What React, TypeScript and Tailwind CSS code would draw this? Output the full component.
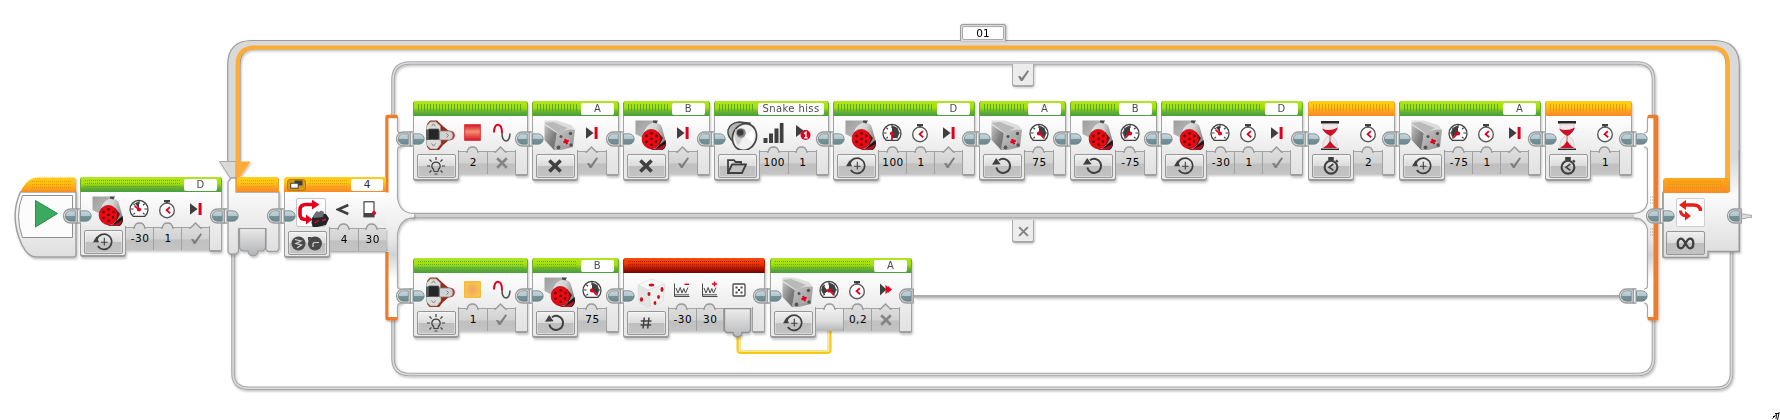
import React from "react";

type Tone = "green" | "orange" | "red";
type Param = { icon: React.ReactNode; value?: string; mark?: "check" | "cross"; bump?: "round" | "tri"; kind?: "in" | "out" };

const INK = "#3f3f3f";
const RED = "#e2001f";

/* ---------- small glyphs ---------- */

const Check = () => (
  <svg width="13" height="13" viewBox="0 0 13 13"><path d="M1 7.200 3.200 7 4.800 9 10.500 1.200 12 2.200 5.500 12H3.800Z" fill="#7e7e7e" /></svg>
);
const Cross = ({ color = "#858585", size = 12, w = 2.7 }: { color?: string; size?: number; w?: number }) => (
  <svg width={size} height={size} viewBox="0 0 12 12"><path d="M1.2 1.2 10.8 10.8M10.8 1.2 1.2 10.8" fill="none" stroke={color} strokeWidth={w} /></svg>
);

const Gauge = ({ kind }: { kind: "low" | "full" | "pos" | "neg" | "wired" }) => {
  const sector = {
    low: "M10 10 V3 A7 7 0 0 0 6 4.2Z",
    full: "M10 10 V3 A7 7 0 0 1 14.9 15 L10 15Z",
    pos: "M10 10 V3 A7 7 0 0 1 15.5 14.2Z",
    neg: "M10 10 V3 A7 7 0 0 0 4.5 14.2Z",
    wired: "M10 10 V3 A7 7 0 0 1 15.5 14.2Z M9 11 L4 5 A7 7 0 0 0 4.5 14.5Z",
  }[kind];
  const needle = { low: "M10.5 11 5.6 6.8", full: "M10 9 V17", pos: "M9 9 15 15.2", neg: "M11 9 5 15.2", wired: "M10 10 15 15.2" }[kind];
  return (
    <svg width="20" height="20" viewBox="0 0 20 20">
      <path d="M4.2 17.3 A9 9 0 1 1 15.8 17.3Z" fill="#fff" stroke={INK} strokeWidth="1.3" />
      <path d="M10 2v3M2 10h2.6M15.4 10H18M4.3 4.6 6 6.2M15.7 4.6 14 6.2M4.4 15.4 6 14M15.6 15.4 14 14" stroke={INK} strokeWidth="1.2" />
      <path d={sector} fill={INK} />
      <path d={needle} stroke={RED} strokeWidth="1.7" />
      <circle cx="10" cy="10.5" r="2.1" fill={RED} />
    </svg>
  );
};

const Watch = () => (
  <svg width="18" height="20" viewBox="0 0 18 20">
    <rect x="6" y="1" width="6" height="2.4" fill={INK} />
    <path d="M9 3v2" stroke={INK} strokeWidth="2" />
    <circle cx="9" cy="11.4" r="7.3" fill="#fff" stroke="#5b5b5b" strokeWidth="1.4" />
    <path d="M11.800 8.200 8.6 11.3 12.200 14.200" fill="none" stroke={RED} strokeWidth="1.8" />
  </svg>
);
const StopAt = () => (
  <svg width="14" height="14" viewBox="0 0 14 14"><path d="M1 1.3 8.6 7 1 12.7Z" fill={INK} /><rect x="9.6" y="1" width="3" height="12" fill={RED} /></svg>
);
const Coast = () => (
  <svg width="14" height="13" viewBox="0 0 14 13"><path d="M1 .5 7.500 6.500 1 12.500Z" fill={INK} /><path d="M6.500 1.500 8.600 4.200V2.800L13 6.500 8.600 10.200V8.800L6.500 11.500Z" fill={RED} /></svg>
);
const Square = ({ warm }: { warm?: boolean }) => (
  <svg width="17" height="17" viewBox="0 0 17 17">
    <defs>
      <linearGradient id="sqRed" x1="0" y1="0" x2="0" y2="1"><stop offset="0" stopColor="#d41528" /><stop offset=".45" stopColor="#f0906f" /><stop offset="1" stopColor="#d8132a" /></linearGradient>
      <radialGradient id="sqAmber"><stop offset="0" stopColor="#eea463" /><stop offset="1" stopColor="#fbc44c" /></radialGradient>
    </defs>
    <rect x=".7" y=".7" width="15.6" height="15.6" fill={warm ? "url(#sqAmber)" : "url(#sqRed)"} stroke={warm ? "#f3b21c" : "#dc2b30"} strokeWidth="1" />
  </svg>
);
const Pulse = () => (
  <svg width="18" height="20" viewBox="0 0 18 20">
    <path d="M1 9.5C1 -1 9 -1 9 10" fill="none" stroke={RED} strokeWidth="2" />
    <path d="M9 10C9 20.500 17 20.500 17 10.500" fill="none" stroke="#4b4b4b" strokeWidth="1.5" />
  </svg>
);
const Bars = () => (
  <svg width="21" height="20" viewBox="0 0 21 20"><path d="M.5 15h4v5h-4zM6 10.500h4V20H6zM11.500 5.500h4V20h-4zM16.800 0h3.700v20h-3.700z" fill={INK} /></svg>
);
const PlayOnce = () => (
  <svg width="16" height="17" viewBox="0 0 16 17">
    <path d="M1 1 9 7 1 13Z" fill={INK} /><circle cx="10.500" cy="11" r="5" fill={RED} />
    <path d="M9 9.700 10.900 8.400V13.800M9.200 13.800h3.400" fill="none" stroke="#fff" strokeWidth="1.400" />
  </svg>
);
const Noise = ({ plus }: { plus?: boolean }) => (
  <svg width="18" height="17" viewBox="0 0 18 17">
    <path d="M1.500 2.500V15.500H16.500M1.500 13.800H16" fill="none" stroke="#4b4b4b" strokeWidth="1" />
    <path d="M3 7 5 12 7.200 6.500 9 12 10.800 7.500 12.500 12 15 6.500" fill="none" stroke="#4b4b4b" strokeWidth="1" />
    <path d={plus ? "M11 3h5M13.500 .5v5" : "M11.500 3.300h4.500"} stroke={RED} strokeWidth="1.400" />
  </svg>
);
const Die = () => (
  <svg width="14" height="14" viewBox="0 0 14 14">
    <rect x="1" y="1" width="12" height="12" rx="1" fill="#fff" stroke="#4b4b4b" strokeWidth="1.300" />
    <path d="M3.500 3.500h2v2h-2zM8.500 3.500h2v2h-2zM6 6h2v2H6zM3.500 8.500h2v2h-2zM8.500 8.500h2v2h-2z" fill={INK} />
  </svg>
);
const Distance = () => (
  <svg width="14" height="17" viewBox="0 0 14 17">
    <rect x="1" y=".8" width="10" height="15" fill="#fff" stroke="#333" strokeWidth="1.100" />
    <rect x="1" y="12" width="10" height="4" fill="#444" /><circle cx="11" cy="12" r="2" fill={RED} />
  </svg>
);

/* ---------- mode button glyphs ---------- */

const ModeLight = () => (
  <svg width="18" height="19" viewBox="0 0 18 19" fill="none" stroke={INK} strokeWidth="1.200">
    <path d="M7 14.500 6.600 12.500C3.200 9.500 5 5.200 9 5.200S14.800 9.500 11.400 12.500L11 14.500Z" />
    <path d="M7.500 17h3M9 0v3M2.500 2.500 4.600 4.700M15.500 2.500 13.400 4.700M0 9h3M15 9h3M2.500 15.500 4.400 13.400M15.500 15.500 13.600 13.400" />
  </svg>
);
const ModeFolder = () => (
  <svg width="20" height="15" viewBox="0 0 20 15"><path d="M1 14V1.200h6L8.500 3H14V5.500M1 14 5 5.500H19L15 14Z" fill="none" stroke={INK} strokeWidth="1.800" /></svg>
);
const ModeTime = () => (
  <svg width="21" height="18" viewBox="0 0 21 18" fill="none" stroke={INK}>
    <path d="M4.800 13A7.600 7.600 0 1 0 3.800 6.500" strokeWidth="1.700" /><path d="M0 9.300 3.600 3.200 6 9.300Z" fill={INK} stroke="none" />
    <path d="M11.300 4.800V12.500M8 9.200h6.500" strokeWidth="1.100" />
  </svg>
);
const ModeOn = () => (
  <svg width="20" height="18" viewBox="0 0 20 18"><path d="M7 3.200A7 7 0 1 1 4.300 10.500" fill="none" stroke={INK} strokeWidth="2" /><path d="M0 7.800 4.200 1 8.600 7.200Z" fill={INK} /></svg>
);
const ModeWatch = () => (
  <svg width="18" height="18" viewBox="0 0 18 18">
    <path d="M6.200 0h5.600v3H6.200z" fill={INK} /><path d="M14 3.300 15.800 5" stroke={INK} strokeWidth="2" /><circle cx="9" cy="10.200" r="6.400" fill="none" stroke={INK} strokeWidth="2.100" />
    <path d="M11.400 7 7 10.200 11.400 13.400" fill="none" stroke={INK} strokeWidth="1.600" />
  </svg>
);
const ModeHash = () => (
  <svg width="12" height="12" viewBox="0 0 12 12"><path d="M4.300 .5 3 11.500M9 .5 7.700 11.500M.8 4h10.700M.5 8h10.700" stroke={INK} strokeWidth="1.500" /></svg>
);
const ModeX = () => <Cross color={INK} size={14} w={3} />;

/* ---------- hardware pictures ---------- */

const LargeMotor = () => (
  <svg width="32" height="32" viewBox="0 0 32 32">
    <defs>
      <linearGradient id="lmArm" x1="0" y1="0" x2="1" y2="1"><stop offset="0" stopColor="#9d9d9d" /><stop offset="1" stopColor="#c4c4c4" /></linearGradient>
      <linearGradient id="lmBody" x1="0" y1="0" x2="1" y2=".3"><stop offset="0" stopColor="#e6e6e6" /><stop offset=".55" stopColor="#d2d2d2" /><stop offset="1" stopColor="#8a8a8a" /></linearGradient>
    </defs>
    <path d="M.5 .5H21V12L10 19 .5 14Z" fill="url(#lmArm)" />
    <path d="M9 12Q12 3 20 2.500 26 3 27 8L31 22Q31 30 22 31L14 28Z" fill="url(#lmBody)" />
    <path d="M18 .5H23L21.500 3.500 18 2.500Z" fill="#4a4a4a" />
    <path d="M21 28 30.500 20Q32 26 29 29T20 31.500Z" fill="#221416" />
    <path d="M13 27Q18 32 24 31 30 29 30.500 24L25 27 19 29Z" fill="#a81620" />
    <path d="M23 12 28 18 24 26Z" fill="#55181c" />
    <ellipse cx="16.300" cy="19" rx="9.200" ry="9.600" fill="#ec0a12" stroke="#a4000a" strokeWidth=".7" />
    <g fill="#5a0307"><ellipse cx="16.500" cy="13.300" rx="1.400" ry="1.200" /><ellipse cx="21.500" cy="16" rx="1.200" ry="1.400" /><ellipse cx="11.500" cy="16" rx="1.300" ry="1.400" /><circle cx="16.500" cy="19" r="1.300" /><ellipse cx="21" cy="21.500" rx="1.200" ry="1.400" /><ellipse cx="11.500" cy="21.800" rx="1.300" ry="1.400" /><circle cx="16.500" cy="24.700" r="1.300" /></g>
  </svg>
);
const MediumMotor = () => (
  <svg width="32" height="32" viewBox="0 0 32 32">
    <defs>
      <linearGradient id="mmSide" x1="0" y1="0" x2="1" y2="1"><stop offset="0" stopColor="#c6c6c6" /><stop offset=".6" stopColor="#7d7d7d" /><stop offset="1" stopColor="#6a6a6a" /></linearGradient>
      <linearGradient id="mmFront" x1="0" y1="0" x2="1" y2="1"><stop offset="0" stopColor="#c8c8c8" /><stop offset="1" stopColor="#8f8f8f" /></linearGradient>
    </defs>
    <path d="M.5 4 13 12 11 31 .5 20Z" fill="url(#mmSide)" />
    <path d="M.5 .5 13 .5 27 5 31.500 10 14 14 .5 5Z" fill="#dedede" /><path d="M.5 3 9 2 24 8 14 13Z" fill="#b9b9b9" />
    <path d="M13 13 Q22 8 31 10L29 27 13 31 10 29Z" fill="url(#mmFront)" />
    <g fill="#555"><circle cx="26.500" cy="13.500" r="1.700" /><circle cx="17" cy="16.500" r="1.500" /><circle cx="14.500" cy="27.500" r="1.900" /><circle cx="27" cy="25" r="1.700" /></g>
    <circle cx="22" cy="21.500" r="4" fill="#b4b4b4" /><path d="M19.400 22.600 24.800 20.400M21 19 23.200 24.200" stroke={RED} strokeWidth="2.200" />
  </svg>
);
const Brick = () => (
  <svg width="32" height="32" viewBox="0 0 32 32">
    <path d="M5 .5H12L19 7 24 11V20L18 25 13 31.500H6L2 27V4Z" fill="#9a2a16" />
    <path d="M5.500 1.800H11L15.500 6V11.500H1.500V6ZM1.500 19H16V24L12 29H5.500L1.500 25Z" fill="#dcdddb" stroke="#8c8c88" strokeWidth=".6" />
    <circle cx="25" cy="15.500" r="4.800" fill="#e01424" /><path d="M1 9.500H5V20H1Z" fill="#595c5c" />
    <rect x="3.500" y="9" width="10.500" height="10.500" rx="1" fill="#242628" stroke="#555" strokeWidth=".8" />
    <path d="M14.500 11H25Q28 12 28 15.500T25 20H14.500Z" fill="#d2d2d2" stroke="#808080" strokeWidth=".8" />
    <path d="M6.500 6.300 8.500 3.800 10.500 6.300M6.500 23.500 8.500 26 10.500 23.500M21.500 13.500 23.500 15.500 21.500 17.500" fill="none" stroke="#777" strokeWidth=".9" />
  </svg>
);
const Speaker = () => (
  <svg width="32" height="32" viewBox="0 0 32 32">
    <path d="M2 10 Q4 3 13 2L24 3 15 28 8 22Q1 17 2 10Z" fill="#b5b5b5" stroke="#444" strokeWidth="1.300" />
    <ellipse cx="18.500" cy="17" rx="11.800" ry="13.600" transform="rotate(22 18.500 17)" fill="#f0f0f0" stroke="#444" strokeWidth="1.700" />
    <path d="M9.500 9 18 16 12 26Q6.500 16 9.500 9Z" fill="#cfcfcf" /><path d="M19 16 28 9Q30 16 26 22Z" fill="#fff" />
    <circle cx="15" cy="13" r="4.800" fill="#858585" /><circle cx="14.300" cy="12.500" r="3.300" fill="#3a3a3a" />
  </svg>
);
const Hourglass = () => (
  <svg width="20" height="32" viewBox="0 0 20 32">
    <rect x="1" y="1" width="18" height="2.600" fill="#2e2428" /><rect x="1" y="28.500" width="18" height="2.600" fill="#2e2428" />
    <path d="M3 4H17Q18 11 11.500 15.500 18 20 17 28H3Q2 20 8.500 15.500 2 11 3 4Z" fill="#eee9e9" stroke="#c7c2c2" strokeWidth=".6" />
    <path d="M2 8.500Q9 12 18 7.500 16 13 10.800 16 5 14 2 8.500Z" fill="#cf1128" /><path d="M10 15V24" stroke="#cf1128" strokeWidth=".7" /><path d="M3 28Q8 25 10 21 13 25 17 28Z" fill="#cf1128" />
  </svg>
);
const Dice = () => (
  <svg width="30" height="32" viewBox="0 0 30 32">
    <path d="M2 8 15 2 29 7 12 13Z" fill="#f7f7f7" stroke="#dcdcdc" strokeWidth=".6" /><path d="M2 8 12 13 15 31 3 26Z" fill="#e3e3e3" stroke="#d8d8d8" strokeWidth=".6" /><path d="M12 13 29 7 27 24 15 31Z" fill="#efefef" stroke="#d8d8d8" strokeWidth=".6" />
    <g fill="#c9101d"><ellipse cx="15.500" cy="8" rx="2.900" ry="1.600" /><ellipse cx="13" cy="17" rx="1.500" ry="2.100" /><ellipse cx="5.500" cy="22.500" rx="1.600" ry="2.200" /><ellipse cx="26" cy="12.500" rx="1.500" ry="2.400" /><ellipse cx="22.500" cy="20" rx="1.400" ry="2.100" /><ellipse cx="19" cy="26" rx="1.400" ry="2" /></g>
  </svg>
);

/* ---------- building parts ---------- */

const Joint = ({ at, half }: { at: string; half?: boolean }) => (
  <svg className={`absolute ${at}`} width="31" height="16" viewBox="0 0 31 16">
    <defs>
      <linearGradient id="pill" x1="0" y1="0" x2="0" y2="1"><stop offset="0" stopColor="#c9d6da" /><stop offset=".5" stopColor="#b3c5cb" /><stop offset=".52" stopColor="#76939a" /><stop offset="1" stopColor="#6c8990" /></linearGradient>
    </defs>
    <path d={half ? "M14.500 1H8.500A7 7 0 0 0 8.500 15H14.500" : "M18.500 1H8.500A7 7 0 0 0 8.500 15H18.500"} fill="#ececec" stroke="#9a9a9a" strokeWidth="1.300" />
    <path d="M13.300 2.800H8.500A5.200 5.200 0 0 0 8.500 13.200H13.300Z" fill="url(#pill)" stroke="#6f878d" strokeWidth=".8" />
    <path d="M15.200 .5V15.500" stroke="#979797" strokeWidth="1.400" />
    {!half && <path d="M17.500 1V15" stroke="#c3c3c3" />}
    {!half && <path d="M18.500 2.800H24A5.200 5.200 0 0 1 24 13.200H18.500Z" fill="url(#pill)" stroke="#6f878d" strokeWidth=".8" />}
  </svg>
);

const tones: Record<Tone, string> = {
  green: "bg-[linear-gradient(#b2e61f,#a4df0c_45%,#5fae38_75%,#4c9c3c)] border-[#6cab2e]",
  orange: "bg-[linear-gradient(#ffcf1c,#ffc90e_35%,#fc9a26_75%,#f88a22)] border-[#f0a023]",
  red: "bg-[linear-gradient(#fb4a08,#ee3300_40%,#a80f00_75%,#6d0500)] border-[#b52000]",
};
const dots: Record<Tone, string> = {
  green: "bg-[#3e9b2b]",
  orange: "bg-[#dd9000]",
  red: "bg-[#8f1800]",
};

const Texture = ({ tone, lined }: { tone: Tone; lined?: boolean }) => (
  <div className={`h-[7px] min-w-0 flex-1 self-start mt-[3px] opacity-75 ${dots[tone]} ${lined
    ? "[mask-image:repeating-linear-gradient(90deg,#000_0_1px,transparent_1px_3px)]"
    : "[mask-image:repeating-linear-gradient(90deg,#000_0_1px,transparent_1px_2px),repeating-linear-gradient(#000_0_1px,transparent_1px_3px)] [mask-composite:intersect]"}`} />
);

const Header = ({ tone, label, wide, lined, className = "" }: { tone: Tone; label?: string; wide?: boolean; lined?: boolean; className?: string }) => (
  <div className={`flex h-[15px] items-center gap-1 rounded-t-[3px] border-x pr-[4px] pl-[4px] ${tones[tone]} ${className}`}>
    <Texture tone={tone} lined={lined} />
    {label && (
      <div className={`flex h-[12px] items-center justify-center rounded-[2px] bg-white text-[10px] leading-[12px] tracking-[0.4px] text-[#4c4c4c] ${wide ? "w-[66px]" : "w-[33px]"}`}>{label}</div>
    )}
  </div>
);

const ModeButton = ({ children }: { children: React.ReactNode }) => (
  <div className="-mt-px flex h-[31px] w-[46px] shrink-0 items-start justify-center rounded-b-[3px] border-x-[1.5px] border-b-2 border-[#9b9b9b] bg-[#e9e9e9] pt-[4px]">
    <div className="flex h-[24px] w-[39px] items-center justify-center rounded-[2px] border border-[#979797] bg-[linear-gradient(#f1f1f1,#dcdcdc_48%,#bfbfbf_52%,#c3c3c3)] shadow-[inset_0_0_0_1px_rgba(255,255,255,.35)]">{children}</div>
  </div>
);

const ParamCell = ({ p, last }: { p: Param; last: boolean }) => {
  if (p.kind === "out")
    return (
      <div className="relative h-[24px] w-[28px] shrink-0">
        <svg className="absolute -left-px top-0" width="29" height="30" viewBox="0 0 29 30">
          <defs><linearGradient id="plug" x1="0" y1="0" x2="0" y2="1"><stop offset="0" stopColor="#ececec" /><stop offset="1" stopColor="#b9babc" /></linearGradient></defs>
          <path d="M1.500 .7H27.500V22.500L25.500 24.500H19C19 30 10 30 10 24.500H3.500L1.500 22.500Z" fill="url(#plug)" stroke="#909090" strokeWidth="1.300" />
        </svg>
      </div>
    );
  const wired = p.kind === "in";
  return (
    <div className={`relative flex h-[23px] min-w-0 flex-1 items-center justify-center border-t-[1.5px] border-[#a3a3a3] pb-px pl-px text-[10.5px] leading-none tracking-[0.5px] text-black ${wired ? "bg-[linear-gradient(#efefef,#dedede_55%,#b4b6b8)]" : "bg-[linear-gradient(#dcdcdc,#d2d2d2_50%,#c0c0c0_54%,#c4c4c4)]"} ${last ? "" : "border-r border-r-[#a2a2a2]"}`}>
      <svg className="absolute -top-[6px] left-1/2 -ml-[7px]" width="13" height="7" viewBox="0 0 13 7">
        <path d={p.bump === "tri" ? "M0 6 H1.500L6.500 1 11.500 6H13V7H0Z" : "M0 6H1.200Q1.800 1 6.500 1T11.800 6H13V7H0Z"} fill={wired ? "#efefef" : "#dcdcdc"} />
        <path d={p.bump === "tri" ? "M0 6 H1.500L6.500 1 11.500 6H13" : "M0 6H1.200Q1.800 1 6.500 1T11.800 6H13"} fill="none" stroke="#999" strokeWidth="1.300" />
      </svg>
      {p.mark === "check" ? <Check /> : p.mark === "cross" ? <Cross /> : p.value}
    </div>
  );
};

type BlockProps = { at: string; tone?: Tone; label?: string; wide?: boolean; lined?: boolean; picture: React.ReactNode; mode: React.ReactNode; params: Param[] };

const Block = ({ at, tone = "green", label, wide, lined, picture, mode, params }: BlockProps) => (
  <div className={`absolute flex flex-col drop-shadow-[1px_2px_1px_rgba(0,0,0,.22)] ${at}`}>
    <Header tone={tone} label={label} wide={wide} lined={lined} />
    <div className="flex h-[35px] items-start border-x-[1.5px] border-[#a3a3a3] bg-[linear-gradient(#fff,#f5f5f5_50%,#ebebeb)]">
      <div className="flex h-[35px] w-[44px] shrink-0 items-start justify-end pr-px pt-[4px]"><div className="flex w-[33px] justify-center">{picture}</div></div>
      <div className="flex min-w-0 flex-1">
        {params.map((p, i) => <div key={i} className="flex h-[33px] min-w-0 flex-1 items-center justify-center">{p.icon}</div>)}
      </div>
      <div className="w-[11px] shrink-0" />
    </div>
    <div className="flex h-[30px] items-start">
      <ModeButton>{mode}</ModeButton>
      {params.map((p, i) => <ParamCell key={i} p={p} last={i === params.length - 1} />)}
      <div className="-mt-px h-[26px] w-[13px] shrink-0 rounded-b-[2px] border-x-[1.5px] border-b-2 border-[#a0a0a0] bg-[linear-gradient(#ebebeb,#e2e2e2)]" />
    </div>
  </div>
);

const gauge = (kind: "low" | "full" | "pos" | "neg", value: string): Param => ({ icon: <Gauge kind={kind} />, value });
const secs = (value: string): Param => ({ icon: <Watch />, value });
const brake: Param = { icon: <StopAt />, mark: "check", bump: "tri" };

const Tab = ({ at, children }: { at: string; children: React.ReactNode }) => (
  <div className={`absolute flex h-[23px] w-[22px] items-center justify-center rounded-b-[3px] border-x-[1.5px] border-b-2 border-[#a9a9a9] bg-[#ececec] pt-[2px] drop-shadow-[1px_1px_1px_rgba(0,0,0,.2)] ${at}`}>{children}</div>
);

/* ---------- wiring and frames ---------- */

const Track = ({ d }: { d: string }) => (
  <g fill="none">
    <path d={d} stroke="#a8a8a8" strokeWidth="3.600" />
    <path d={d} stroke="#dcdcdc" strokeWidth="1.500" />
  </g>
);

const Frames = () => (
  <svg className="absolute inset-0" width="1780" height="420" viewBox="0 0 1780 420">
    <defs>
      <filter id="soft" x="-5%" y="-5%" width="110%" height="115%"><feDropShadow dx="1" dy="1.500" stdDeviation="1" floodOpacity=".25" /></filter>
      <linearGradient id="body" x1="0" y1="0" x2="0" y2="1"><stop offset="0" stopColor="#fff" /><stop offset="1" stopColor="#dedede" /></linearGradient>
      <linearGradient id="spine" x1="0" y1="116" x2="0" y2="320" gradientUnits="userSpaceOnUse"><stop offset="0" stopColor="#fff" /><stop offset=".35" stopColor="#fff" /><stop offset=".6" stopColor="#e9e9e9" /><stop offset=".68" stopColor="#d3d3d3" /><stop offset=".8" stopColor="#fff" /></linearGradient>
      <linearGradient id="amber" x1="0" y1="0" x2="0" y2="1"><stop offset="0" stopColor="#ffcc18" /><stop offset=".35" stopColor="#ffc30f" /><stop offset="1" stopColor="#f98c22" /></linearGradient>
      <linearGradient id="tailFade" x1="0" y1="158" x2="0" y2="252" gradientUnits="userSpaceOnUse"><stop offset="0" stopColor="#d9d9d9" /><stop offset=".4" stopColor="#fbfbfb" /><stop offset="1" stopColor="#dedede" /></linearGradient>
      <linearGradient id="plug2" x1="0" y1="0" x2="0" y2="1"><stop offset="0" stopColor="#e9e9e9" /><stop offset="1" stopColor="#b2b3b6" /></linearGradient>
    </defs>

    <g filter="url(#soft)">
      <Track d="M233 250V373Q233 388.300 249 388.300H1716Q1731.500 388.300 1731.500 373V250" />
      <Track d="M393 118V80Q393 63 410 63H1637Q1653.500 63 1653.500 80V118" />
      <Track d="M393 318V358Q393 374.500 410 374.500H1637Q1653.500 374.500 1653.500 358V318" />
      <path d="M412 213.500H1636M412 217.800H1636" fill="none" stroke="#a6a6a6" strokeWidth="1.300" />
      <path d="M412 215.600H1636" stroke="#cfcfcf" strokeWidth="3" />
      <path d="M914 296.200H1620" stroke="#999" strokeWidth="2.600" /><path d="M914 296H1620" stroke="#cfcfcf" strokeWidth=".8" />
    </g>

    {/* loop return band */}
    <g filter="url(#soft)">
      <path d="M227.700 163V65Q227.700 40.500 252 40.500H1714Q1739.300 40.500 1739.300 66V251.500H1708V257.500H1663V192H1726V65Q1726 49 1711 49H255Q240 49 240 65V163Z" fill="#d9d9d9" stroke="#9b9b9b" strokeWidth="1.200" />
      <path d="M237.500 164V65Q237.500 47.500 255 47.500H1711Q1728 47.500 1728 65V190" fill="none" stroke="#ffad33" strokeWidth="4" />
      <path d="M219.500 161.500H236V180H231.500Z" fill="#d9d9d9" stroke="#a5a5a5" />
      <path d="M235.500 161.500H250.500L238 180H235.500Z" fill="#ffab35" />
    </g>
    <path d="M1730.500 158H1738.600V251H1709V257H1663.500V192H1730.500Z" fill="url(#tailFade)" />
    <path d="M1739.300 150V251.500H1708V255.500Q1708 257.500 1706 257.500H1665Q1663 257.500 1663 255V192" fill="none" stroke="#9b9b9b" strokeWidth="1.500" />
    <path d="M1663 193V181Q1663 178 1666 178H1726V150H1730V190Q1730 193 1727 193Z" fill="url(#amber)" />
    <rect x="1726" y="120" width="4" height="58.500" fill="#ffad33" />

    {/* loop entry */}
    <g filter="url(#soft)">
      <path d="M236 178 231 178 228 182V252L230 254H236L238.500 251.500V229H266V249.500L268 251.500H277L279 249V192H236Z" fill="url(#body)" stroke="#a0a0a0" strokeWidth="1.300" />
      <path d="M239.500 228.500H265.500V248.500L263 251H258C258 257.500 248 257.500 248 251H242L239.500 248.500Z" fill="url(#plug2)" stroke="#999" strokeWidth="1.200" />
    </g>

    {/* start block */}
    <g filter="url(#soft)">
      <path d="M20.500 192H76V254.500Q76 257 73.500 257H36Q28 257 22 245 9 217 20.500 192Z" fill="url(#body)" stroke="#a0a0a0" strokeWidth="1.500" />
      <path d="M20.500 192Q27 177.500 38 177.500H73.500Q76 177.500 76 180V192Z" fill="url(#amber)" />
      <path d="M22.500 195.500H72.500V237.500H22.500Q14.500 216 22.500 195.500Z" fill="#fcfcfc" stroke="#8f8f8f" />
      <path d="M35.500 200.500 57.500 213.500 35.500 227Z" fill="#3aaa5f" stroke="#2c8d4c" />
    </g>

    {/* switch spines */}
    <g filter="url(#soft)">
      <path d="M388 118H397.500V133H403V146H397.500V198Q400 213.500 414 213.500V217.800Q400 217.800 397.500 234V289H403V303H397.500V317H388V250H330V192H388Z" fill="url(#spine)" />
      <path d="M397.500 118V130Q397.500 133 401 133M401 147Q397.500 147 397.500 150V198Q400 213.500 414 213.500M414 217.800Q400 217.800 397.500 234V286Q397.500 289 401 289M401 303.500Q397.500 303.500 397.500 307V318" fill="none" stroke="#a8a8a8" strokeWidth="1.200" />
      <path d="M398 118.200H388.500V192.500H385.300V117Q385.300 114.800 387.500 114.800H396Q398 114.800 398 118.200ZM385.300 252H388.500V317H398Q398 320.500 396 320.500H387.500Q385.300 320.500 385.300 318.500Z" fill="#ec7d29" />
      <path d="M1653.500 118H1647.500V130Q1647.500 133 1644 133V147Q1647.500 147 1647.500 150V203Q1645 213 1634 213.500V217.800Q1645 218 1647.500 229V286Q1647.500 289 1644 289V303Q1647.500 303 1647.500 307V317H1653.500Z" fill="url(#spine)" />
      <path d="M1647.500 118V130Q1647.500 133 1644 133M1644 147Q1647.500 147 1647.500 150V203Q1645 213 1634 213.500M1634 217.800Q1645 218 1647.500 229V286Q1647.500 289 1644 289M1644 303Q1647.500 303 1647.500 307V317" fill="none" stroke="#a8a8a8" strokeWidth="1.200" />
      <path d="M1647.300 118.200Q1647.300 114.800 1649.500 114.800H1656Q1658.300 114.800 1658.300 117V318.500Q1658.300 320.500 1656 320.500H1649.500Q1647.300 320.500 1647.300 317H1653.500V118.200Z" fill="#ec7d29" />
    </g>
    <path d="M1650 197h4M1650 200h4M1650 203h4M1650 229h4M1650 232h4M1650 235h4" stroke="#aaa" strokeDasharray="1 1" />

    {/* data wire */}
    <path d="M738.500 335V349.500Q738.500 352 741 352H827Q829.500 352 829.500 349.500V330" fill="none" stroke="#f7c711" strokeWidth="4" />
    <path d="M739.300 335V351H828.700V330" fill="none" stroke="#fdebaa" strokeWidth="1.400" />

    <path d="M1739 214H1745L1748 215H1751.500V217.500H1748L1745 218.500H1739Z" fill="#dcdcdc" stroke="#999" strokeWidth=".8" />
    <path d="M1772.500 418.500 1776 414.500 1779.500 412.500M1775 413.500H1779M1776.500 414.500 1776 419M1779 413 1777.500 420M1773 416.500H1775" fill="none" stroke="#111" strokeWidth="1" />
  </svg>
);

export default function App() {
  return (
    <main className="relative h-[420px] w-[1780px] overflow-hidden bg-white font-['DejaVu_Sans',sans-serif]">
      <Frames />

      <div className="absolute left-[960px] top-[24px] h-[17px] w-[46px] rounded-t-[3px] border-x-[1.5px] border-t-[1.5px] border-[#a0a0a0] bg-[#dcdcdc] p-px drop-shadow-[1px_0_1px_rgba(0,0,0,.25)]">
        <div className="flex h-[14px] items-center justify-center rounded-[2px] border border-[#aaa] bg-white pt-px text-[10.5px] leading-none text-black">01</div>
      </div>
      <Tab at="left-[1012px] top-[64px]"><Check /></Tab>
      <Tab at="left-[1012px] top-[220px]"><Cross size={11} w={2.2} /></Tab>

      {/* main sequence */}
      <div className="absolute left-[32px] top-[178px] flex h-[14px] w-[40px]"><Texture tone="orange" /></div>
      <Block at="left-[80px] top-[177px] w-[142px]" label="D" picture={<LargeMotor />} mode={<ModeTime />} params={[gauge("low", "-30"), secs("1"), brake]} />
      <Header tone="orange" className="absolute left-[236px] top-[177px] w-[43px]" />

      <div className="absolute left-[284px] top-[177px] flex w-[102px] flex-col">
        <div className="flex h-[15px] items-center gap-1 rounded-tl-[3px] bg-[linear-gradient(#ffcf1c,#ffc90e_35%,#fc9a26_75%,#f88a22)] px-[3px]">
          <div className="flex h-[12px] w-[19px] items-center justify-center rounded-[3px] border border-[#b97a00] bg-[#d99b17]">
            <svg width="13" height="9" viewBox="0 0 13 9"><rect x="4.500" y=".5" width="8" height="5" fill="#3f3f3f" /><rect x=".7" y="3.200" width="7.500" height="5" fill="#fff" stroke="#3f3f3f" /></svg>
          </div>
          <Texture tone="orange" />
          <div className="flex h-[12px] w-[32px] items-center justify-center rounded-[2px] bg-white text-[10.5px] leading-none text-[#333]">4</div>
        </div>
        <div className="flex h-[36px] items-start border-l-[1.500px] border-[#a3a3a3] bg-[linear-gradient(#fff,#f5f5f5_50%,#ebebeb)] pl-[11px] pt-[6px]">
          <div className="relative h-[29px] w-[30px] shrink-0 rounded-[2px] border border-[#c4c4c4] bg-[#fdfdfd]">
            <svg className="absolute left-0 top-0" width="34" height="32" viewBox="0 0 34 32">
              <path d="M16 5.500H9Q3 5.500 3 11V15.500Q3 20.500 9 20.500H10" fill="none" stroke={RED} strokeWidth="3.600" /><path d="M15 .8 22.500 5.600 15 10.500ZM9 15.500 15.500 20.500 9 25.500Z" fill={RED} />
              <path d="M15 19 19 14 29 15 32 19.500 29 26 16 29 14.500 24Z" fill="#242428" /><path d="M16 17 19.500 12 22 13 24 11.500 27 13 26 18 17 19Z" fill="#6b6f74" /><path d="M17.500 24 22 21.500M25 21.500 29 20.500" stroke="#d01825" strokeWidth="1.400" />
            </svg>
          </div>
          <div className="flex flex-1 items-center pt-[3px]">
            <div className="flex flex-1 justify-center pl-[2px]"><svg width="13" height="13" viewBox="0 0 13 13"><path d="M12.300 2 2 6.500 12.300 11" fill="none" stroke={INK} strokeWidth="2.600" /></svg></div>
            <div className="flex flex-1 justify-center pr-[2px]"><Distance /></div>
          </div>
        </div>
        <div className="flex h-[30px] items-start drop-shadow-[1px_2px_1px_rgba(0,0,0,.22)]">
          <ModeButton>
            <svg width="32" height="15" viewBox="0 0 32 15">
              <circle cx="7.500" cy="7.500" r="7" fill="#494949" /><path d="M4 3.500 10 5 5 7.500 10.500 9 6 12" fill="none" stroke="#d5d5d5" strokeWidth="1.200" />
              <circle cx="24" cy="7.500" r="7" fill="#494949" /><path d="M17 1h4l-4 4z" fill="#494949" /><path d="M22 11V8.500Q22 6.500 24 6.500H28" fill="none" stroke="#d5d5d5" strokeWidth="1.200" />
            </svg>
          </ModeButton>
          <ParamCell p={{ icon: null, value: "4" }} last={false} />
          <ParamCell p={{ icon: null, value: "30" }} last />
        </div>
      </div>

      {/* true branch */}
      <Block lined at="left-[413px] top-[101px] w-[115px]" picture={<Brick />} mode={<ModeLight />} params={[{ icon: <Square />, value: "2" }, { icon: <Pulse />, mark: "cross", bump: "tri" }]} />
      <Block lined at="left-[532px] top-[101px] w-[87px]" label="A" picture={<MediumMotor />} mode={<ModeX />} params={[brake]} />
      <Block lined at="left-[623px] top-[101px] w-[87px]" label="B" picture={<LargeMotor />} mode={<ModeX />} params={[brake]} />
      <Block lined at="left-[714px] top-[101px] w-[115px]" label="Snake hiss" wide picture={<Speaker />} mode={<ModeFolder />} params={[{ icon: <Bars />, value: "100" }, { icon: <PlayOnce />, value: "1" }]} />
      <Block lined at="left-[833px] top-[101px] w-[142px]" label="D" picture={<LargeMotor />} mode={<ModeTime />} params={[gauge("full", "100"), secs("1"), brake]} />
      <Block lined at="left-[979px] top-[101px] w-[87px]" label="A" picture={<MediumMotor />} mode={<ModeOn />} params={[gauge("pos", "75")]} />
      <Block lined at="left-[1070px] top-[101px] w-[87px]" label="B" picture={<LargeMotor />} mode={<ModeOn />} params={[gauge("neg", "-75")]} />
      <Block lined at="left-[1161px] top-[101px] w-[142px]" label="D" picture={<LargeMotor />} mode={<ModeTime />} params={[gauge("low", "-30"), secs("1"), brake]} />
      <Block lined at="left-[1308px] top-[101px] w-[87px]" tone="orange" picture={<div className="pr-[12px]"><Hourglass /></div>} mode={<ModeWatch />} params={[secs("2")]} />
      <Block lined at="left-[1399px] top-[101px] w-[142px]" label="A" picture={<MediumMotor />} mode={<ModeTime />} params={[gauge("neg", "-75"), secs("1"), brake]} />
      <Block lined at="left-[1545px] top-[101px] w-[87px]" tone="orange" picture={<div className="pr-[12px]"><Hourglass /></div>} mode={<ModeWatch />} params={[secs("1")]} />

      {/* false branch */}
      <Block at="left-[413px] top-[258px] w-[115px]" picture={<Brick />} mode={<ModeLight />} params={[{ icon: <Square warm />, value: "1" }, { icon: <Pulse />, mark: "check", bump: "tri" }]} />
      <Block at="left-[532px] top-[258px] w-[87px]" label="B" picture={<LargeMotor />} mode={<ModeOn />} params={[gauge("pos", "75")]} />
      <Block at="left-[623px] top-[258px] w-[142px]" tone="red" picture={<Dice />} mode={<ModeHash />} params={[{ icon: <Noise />, value: "-30" }, { icon: <Noise plus />, value: "30" }, { icon: <Die />, kind: "out" }]} />
      <Block at="left-[770px] top-[258px] w-[142px]" label="A" picture={<MediumMotor />} mode={<ModeTime />} params={[{ icon: <Gauge kind="wired" />, kind: "in" }, secs("0,2"), { icon: <Coast />, mark: "cross", bump: "tri" }]} />

      {/* loop end */}
      <div className="absolute left-[1668px] top-[178px] flex h-[14px] w-[53px]"><Texture tone="orange" /></div>
      <div className="absolute left-[1676px] top-[198px] flex h-[29px] w-[29px] items-start justify-center rounded-[2px] border border-[#cfcfcf] bg-[#fcfcfc] pt-px">
        <svg width="25" height="22" viewBox="0 0 25 22">
          <path d="M6 5H15Q22.500 5 22.500 11" fill="none" stroke="#e8201c" strokeWidth="3.400" /><path d="M8 0V10L1 5Z" fill="#e8201c" />
          <path d="M2.500 10.500Q2.500 15.500 8 16" fill="none" stroke="#e8201c" strokeWidth="3" /><path d="M7 11 13 16 7 20.500Z" fill="#e8201c" />
        </svg>
      </div>
      <div className="absolute left-[1666px] top-[231px] flex h-[24px] w-[39px] items-center justify-center rounded-[2px] border border-[#979797] bg-[linear-gradient(#f1f1f1,#dcdcdc_48%,#bfbfbf_52%,#c3c3c3)]">
        <svg width="19" height="13" viewBox="0 0 19 13"><path d="M9.500 6.500C7.500 2.800 6.800 1.700 5 1.700 2.800 1.700 1.700 3.800 1.700 6.500S2.800 11.300 5 11.300C6.800 11.300 7.500 10.200 9.500 6.500 11.500 2.800 12.200 1.700 14 1.700 16.200 1.700 17.300 3.800 17.300 6.500S16.200 11.300 14 11.300C12.200 11.300 11.500 10.200 9.500 6.500Z" fill="none" stroke={INK} strokeWidth="2.300" /></svg>
      </div>

      <Joint at="left-[62px] top-[208px]" />
      <Joint at="left-[209px] top-[208px]" />
      <Joint at="left-[266px] top-[208px]" />
      <Joint at="left-[395px] top-[131px]" />
      <Joint at="left-[514px] top-[131px]" />
      <Joint at="left-[605px] top-[131px]" />
      <Joint at="left-[696px] top-[131px]" />
      <Joint at="left-[815px] top-[131px]" />
      <Joint at="left-[961px] top-[131px]" />
      <Joint at="left-[1052px] top-[131px]" />
      <Joint at="left-[1143px] top-[131px]" />
      <Joint at="left-[1290px] top-[131px]" />
      <Joint at="left-[1381px] top-[131px]" />
      <Joint at="left-[1527px] top-[131px]" />
      <Joint at="left-[1618px] top-[131px]" />
      <Joint at="left-[395px] top-[288px]" />
      <Joint at="left-[514px] top-[288px]" />
      <Joint at="left-[605px] top-[288px]" />
      <Joint at="left-[752px] top-[288px]" />
      <Joint half at="left-[898px] top-[288px]" />
      <Joint at="left-[1618px] top-[288px]" />
      <Joint at="left-[1645px] top-[208px]" />
      <Joint half at="left-[1726px] top-[208px]" />
    </main>
  );
}
